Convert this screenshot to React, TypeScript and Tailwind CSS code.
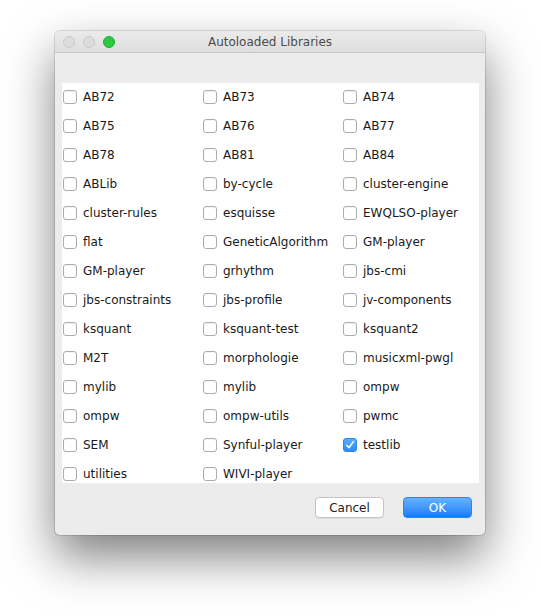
import { useState } from 'react';

const ROWS: string[][] = [
  ['AB72', 'AB73', 'AB74'],
  ['AB75', 'AB76', 'AB77'],
  ['AB78', 'AB81', 'AB84'],
  ['ABLib', 'by-cycle', 'cluster-engine'],
  ['cluster-rules', 'esquisse', 'EWQLSO-player'],
  ['flat', 'GeneticAlgorithm', 'GM-player'],
  ['GM-player', 'grhythm', 'jbs-cmi'],
  ['jbs-constraints', 'jbs-profile', 'jv-components'],
  ['ksquant', 'ksquant-test', 'ksquant2'],
  ['M2T', 'morphologie', 'musicxml-pwgl'],
  ['mylib', 'mylib', 'ompw'],
  ['ompw', 'ompw-utils', 'pwmc'],
  ['SEM', 'Synful-player', 'testlib'],
  ['utilities', 'WIVI-player'],
];

function Checkbox({ checked, onToggle, label }: { checked: boolean; onToggle: () => void; label: string }) {
  return (
    <label className="flex items-center gap-[6px] cursor-default select-none" onClick={onToggle}>
      {checked ? (
        <span className="flex h-[14px] w-[14px] items-center justify-center rounded-[3px] bg-gradient-to-b from-[#5aabfd] to-[#2a8cf8] border border-[#2d86e8]">
          <svg width="10" height="10" viewBox="0 0 10 10">
            <path d="M1.8 5.2 L4 7.8 L8.4 1.6" fill="none" stroke="white" strokeWidth="1.5" strokeLinecap="round" strokeLinejoin="round" />
          </svg>
        </span>
      ) : (
        <span className="h-[14px] w-[14px] rounded-[3px] border border-[#acacac] bg-white shadow-[inset_0_1px_0_rgba(0,0,0,0.04)]" />
      )}
      <span className="text-[12px] leading-none text-[#1a1a1a]">{label}</span>
    </label>
  );
}

export default function App() {
  const [checked, setChecked] = useState<Record<string, boolean>>({ '12-2': true });

  const toggle = (key: string) => setChecked((prev) => ({ ...prev, [key]: !prev[key] }));

  return (
    <div
      className="h-[616px] w-[541px] bg-white pl-[55px] pt-[31px]"
      style={{ fontFamily: '"DejaVu Sans", "Liberation Sans", sans-serif' }}
    >
      <div className="flex h-[504px] w-[430px] flex-col overflow-hidden rounded-[5px] bg-[#ececec] shadow-[0_0_0_1px_rgba(0,0,0,0.12),0_22px_48px_rgba(0,0,0,0.5)]">
        {/* title bar */}
        <div className="relative flex h-[22px] items-center justify-center border-b border-[#c6c6c6] bg-gradient-to-b from-[#ebebeb] to-[#dedede]">
          <div className="absolute left-[8px] top-[5px] flex gap-[8px]">
            <span className="h-[12px] w-[12px] rounded-full border border-[#c8c8c8] bg-[#dcdcdc]" />
            <span className="h-[12px] w-[12px] rounded-full border border-[#c8c8c8] bg-[#dcdcdc]" />
            <span className="h-[12px] w-[12px] rounded-full border border-[#1eae35] bg-[#2bc840]" />
          </div>
          <span className="text-[12px] text-[#4c4c4c]">Autoloaded Libraries</span>
        </div>

        {/* list */}
        <div className="ml-[7px] mr-[6px] mt-[30px] h-[400px] bg-white pl-[1px] pt-[1px]">
          <div className="grid grid-cols-[140px_140px_136px] auto-rows-[26px] gap-y-[3px]">
            {ROWS.map((row, r) =>
              row.map((name, c) => {
                const key = `${r}-${c}`;
                return (
                  <Checkbox key={key} label={name} checked={!!checked[key]} onToggle={() => toggle(key)} />
                );
              })
            )}
          </div>
        </div>

        {/* buttons */}
        <div className="mr-[13px] mt-[14px] flex justify-end gap-[19px]">
          <button className="h-[21px] w-[69px] rounded-[4px] border border-[#c4c4c4] bg-white text-[12px] text-[#1c1c1c] shadow-[0_1px_0_rgba(0,0,0,0.06)]">
            Cancel
          </button>
          <button className="h-[21px] w-[69px] rounded-[4px] border border-[#2a84f0] bg-gradient-to-b from-[#69b1fa] to-[#0a7efd] text-[12px] text-white">
            OK
          </button>
        </div>
      </div>
    </div>
  );
}
